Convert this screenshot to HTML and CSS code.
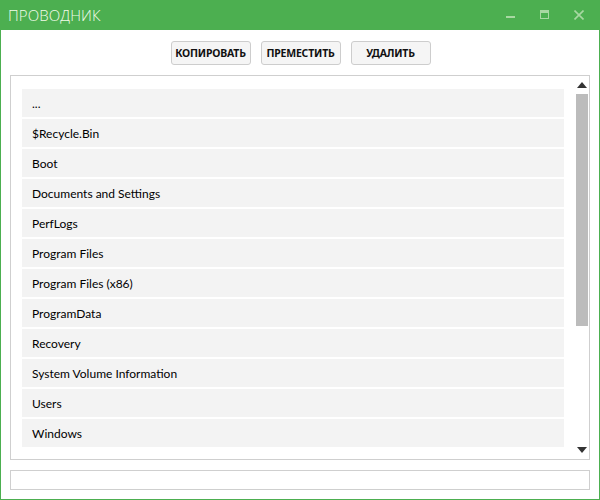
FILE: index.html
```html
<!DOCTYPE html>
<html lang="ru">
<head>
<meta charset="utf-8">
<title>Проводник</title>
<link rel="stylesheet" href="styles.css">
</head>
<body>
<div class="window">
  <div class="titlebar">
    <span class="title">ПРОВОДНИК</span>
    <div class="controls">
      <span class="ctl"><svg width="10" height="10" viewBox="0 0 10 10"><rect x="0" y="6" width="9" height="2" fill="currentColor"/></svg></span>
      <span class="ctl"><svg width="10" height="10" viewBox="0 0 10 10"><rect x="0.5" y="0.5" width="8" height="8" fill="none" stroke="currentColor"/><rect x="0" y="0" width="9" height="3" fill="currentColor"/></svg></span>
      <span class="ctl"><svg width="10" height="10" viewBox="0 0 10 10"><path d="M0.5 0.5 L9.5 9.5 M9.5 0.5 L0.5 9.5" stroke="currentColor" stroke-width="1.6"/></svg></span>
    </div>
  </div>
  <div class="content">
    <div class="toolbar">
      <button class="btn">КОПИРОВАТЬ</button>
      <button class="btn">ПРЕМЕСТИТЬ</button>
      <button class="btn">УДАЛИТЬ</button>
    </div>
    <div class="listbox">
      <ul class="items">
        <li class="item">...</li>
        <li class="item">$Recycle.Bin</li>
        <li class="item">Boot</li>
        <li class="item">Documents and Settings</li>
        <li class="item">PerfLogs</li>
        <li class="item">Program Files</li>
        <li class="item">Program Files (x86)</li>
        <li class="item">ProgramData</li>
        <li class="item">Recovery</li>
        <li class="item">System Volume Information</li>
        <li class="item">Users</li>
        <li class="item">Windows</li>
      </ul>
      <div class="scrollbar">
        <span class="arrow up"></span>
        <span class="thumb"></span>
        <span class="spacer"></span>
        <span class="arrow down"></span>
      </div>
    </div>
    <div class="pathbox"></div>
  </div>
</div>
</body>
</html>
```
FILE: styles.css
```css
* { box-sizing: border-box; }
html, body { margin: 0; padding: 0; }
body {
  width: 600px;
  height: 500px;
  font-family: "Noto Sans", "Open Sans", sans-serif;
  background: #fff;
}
.window {
  width: 600px;
  height: 500px;
  background: #4caf50;
  padding: 0 1px 1px 1px;
  display: flex;
  flex-direction: column;
}
.titlebar {
  height: 30px;
  display: flex;
  align-items: center;
  justify-content: space-between;
  padding-left: 7px;
  flex: none;
}
.title {
  color: #f2fbe9;
  font-size: 15px;
  font-weight: 300;
  letter-spacing: 0.1px;
  font-family: "Open Sans", "Noto Sans", sans-serif;
  margin-top: -1px;
}
.controls {
  display: flex;
  height: 30px;
  align-items: flex-start;
  padding-right: 3px;
}
.ctl {
  color: #a8d8a2;
  width: 34px;
  height: 30px;
  display: flex;
  justify-content: center;
  padding-top: 10px;
}
.content {
  flex: 1;
  background: #fff;
  display: flex;
  flex-direction: column;
  padding: 11px 9px 9px 9px;
}
.toolbar {
  display: flex;
  justify-content: center;
  gap: 10px;
  height: 24px;
  margin-bottom: 10px;
  padding-left: 1px;
}
.btn {
  width: 80px;
  height: 24px;
  border: 1px solid #cdcdcd;
  border-radius: 3px;
  background: #f5f5f5;
  font-family: "Noto Sans", "Open Sans", sans-serif;
  font-size: 10.5px;
  font-weight: 700;
  color: #111;
  padding: 0;
  letter-spacing: -0.2px;
}
.listbox {
  height: 385px;
  border: 1px solid #cfcfcf;
  display: flex;
  padding: 13px 1px 12px 11px;
}
.items {
  list-style: none;
  margin: 0;
  padding: 0;
  width: 542px;
  display: flex;
  flex-direction: column;
  gap: 2px;
}
.item {
  height: 28px;
  background: #f3f3f3;
  padding-left: 10px;
  font-family: Lato, "Noto Sans", sans-serif;
  font-size: 12px;
  color: #000;
  display: flex;
  align-items: center;
}
.scrollbar {
  width: 12px;
  margin-left: 12px;
  margin-top: -7px;
  margin-bottom: -6px;
  display: flex;
  flex-direction: column;
  align-items: center;
}
.arrow {
  width: 0;
  height: 0;
  border-left: 5px solid transparent;
  border-right: 5px solid transparent;
  flex: none;
}
.arrow.up {
  border-bottom: 6px solid #333;
  margin-left: -1px;
}
.arrow.down {
  border-top: 6px solid #333;
  margin-left: -1px;
}
.thumb {
  width: 12px;
  height: 232px;
  background: #bcbcbc;
  margin-top: 6px;
  flex: none;
}
.spacer { flex: 1; }
.pathbox {
  margin-top: 10px;
  height: 20px;
  border: 1px solid #cfcfcf;
}
```
